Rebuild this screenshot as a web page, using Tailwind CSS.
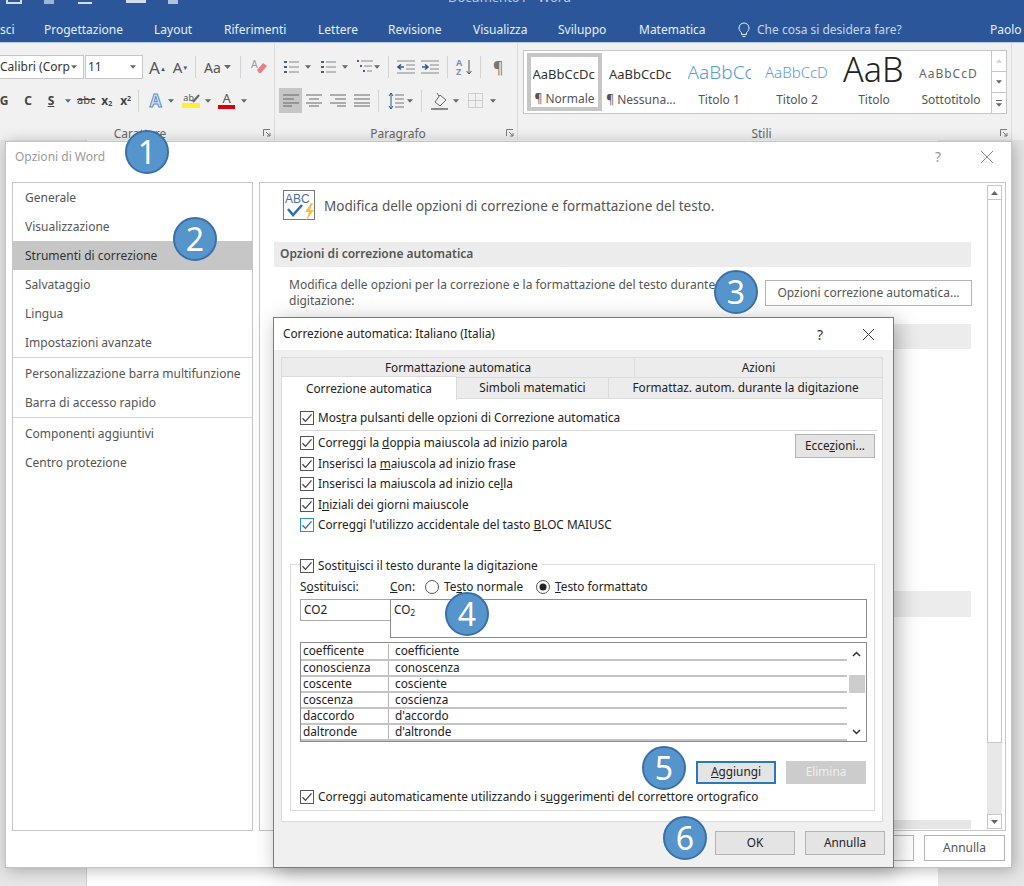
<!DOCTYPE html>
<html lang="it">
<head>
  <meta charset="UTF-8" />
  <title>Opzioni di Word</title>
  <script src="https://cdn.jsdelivr.net/npm/@tailwindcss/browser@4"></script>
</head>
<body class="m-0 bg-white">
<svg class="hidden">
  <symbol id="cb" viewBox="0 0 14 14"><rect x=".5" y=".5" width="13" height="13" fill="#fff" stroke="#555"/><path d="M2.5 7.2l3 3.2 6-7" fill="none" stroke="#444" stroke-width="1.3"/></symbol>
  <symbol id="cb-blue" viewBox="0 0 14 14"><rect x=".5" y=".5" width="13" height="13" fill="#fff" stroke="#2f8fd0"/><path d="M2.5 7.2l3 3.2 6-7" fill="none" stroke="#2a6f9e" stroke-width="1.3"/></symbol>
  <symbol id="caret" viewBox="0 0 7 4"><path d="M0 0h7L3.5 4z" fill="#666"/></symbol>
</svg>

<div class="relative w-[1024px] h-[886px] overflow-hidden font-['Noto_Sans',sans-serif] text-[12px] text-[#333]">

  <!-- title bar + tabs -->
  <div class="h-[43px] bg-[#2b579a] border-b border-[#b9cde6] text-white overflow-hidden">
    <div class="h-[18px] flex items-start">
      <div class="flex items-start gap-[22px] pl-[6px] w-[440px] opacity-80">
        <div class="w-[16px] h-[4px] border-b-2 border-x-2 border-white"></div>
        <div class="w-[10px] h-[4px] bg-white/70"></div>
        <div class="w-[14px] h-[4px] border-b-2 border-white ml-[2px]"></div>
        <div class="w-[20px] h-[3px] bg-white ml-[12px]"></div>
        <div class="w-[10px] h-[4px] bg-white/80"></div>
      </div>
      <div class="ml-[8px] -mt-[12px] text-[13px] text-white/70">Documento1 - Word</div>
    </div>
    <div class="h-[24px] flex items-center text-[12px] text-[#e6edf7]">
      <span class="w-[44px]">sci</span>
      <span class="w-[110px]">Progettazione</span>
      <span class="w-[70px]">Layout</span>
      <span class="w-[94px]">Riferimenti</span>
      <span class="w-[70px]">Lettere</span>
      <span class="w-[85px]">Revisione</span>
      <span class="w-[85px]">Visualizza</span>
      <span class="w-[81px]">Sviluppo</span>
      <span class="w-[99px]">Matematica</span>
      <svg class="w-[12px] h-[16px] mr-[7px]" viewBox="0 0 12 16" fill="none" stroke="#e6edf7"><path d="M3.5 10.5C2 9.2 1 8 1 6a5 5 0 0 1 10 0c0 2-1 3.2-2.500 4.500v2h-5zM4.500 14.500h3"/></svg>
      <span class="w-[233px] text-[#c6d5ea]">Che cosa si desidera fare?</span>
      <span>Paolo</span>
    </div>
  </div>

  <!-- ribbon -->
  <div class="h-[97px] bg-[#f1f1f1] flex">
    <!-- Carattere -->
    <div class="w-[275px] shrink-0 border-r border-[#dcdcdc] relative">
      <div class="flex items-center h-[24px] mt-[12px] -ml-[5px]">
        <div class="w-[89px] h-[24px] bg-white border border-[#c6c6c6] flex items-center justify-between pr-[6px]"><span class="pl-[4px] whitespace-nowrap">Calibri (Corp</span><svg class="w-[6px] h-[4px]"><use href="#caret"/></svg></div>
        <div class="w-[58px] h-[24px] ml-[1px] bg-white border border-[#c6c6c6] flex items-center justify-between pr-[6px]"><span class="pl-[2px]">11</span><svg class="w-[6px] h-[4px]"><use href="#caret"/></svg></div>
        <div class="w-[23px] ml-[3px] text-center text-[17px] leading-none text-[#555]">A<sup class="text-[6px] text-[#2b579a]">▲</sup></div>
        <div class="w-[23px] text-center text-[15px] leading-none text-[#555]">A<sup class="text-[6px] text-[#2b579a]">▼</sup></div>
        <div class="w-px h-[22px] bg-[#d4d4d4] ml-[3px]"></div>
        <div class="ml-[8px] text-[14px] text-[#555]">Aa</div>
        <svg class="w-[7px] h-[4px] ml-[3px]"><use href="#caret"/></svg>
        <div class="w-px h-[22px] bg-[#d4d4d4] ml-[9px]"></div>
        <svg class="w-[18px] h-[18px] ml-[9px]" viewBox="0 0 18 18"><text x="1" y="10" font-size="10" fill="#8a9ab0" font-family="Liberation Sans">A</text><path d="M7 12l6-7 4 3-6 7H9z" fill="#e8808a"/></svg>
      </div>
      <div class="flex items-center h-[25px] mt-[9px] text-[#444]">
        <b class="w-[12px] text-center text-[12px] -ml-[2px]">G</b>
        <b class="w-[14px] ml-[11px] text-center text-[12px]">C</b>
        <b class="w-[12px] ml-[10px] text-center text-[12px] underline">S</b>
        <svg class="w-[6px] h-[4px] ml-[8px]"><use href="#caret"/></svg>
        <span class="ml-[6px] text-[11px] line-through">abc</span>
        <b class="ml-[6px] text-[12px]">x<sub class="text-[7px]">2</sub></b>
        <b class="ml-[8px] text-[12px]">x<sup class="text-[7px]">2</sup></b>
        <div class="w-px h-[22px] bg-[#d4d4d4] ml-[7px]"></div>
        <span class="w-[17px] ml-[8px] text-center text-[17px] font-bold text-[#d9e6f5] [-webkit-text-stroke:1px_#5b8fc7]">A</span>
        <svg class="w-[6px] h-[4px] ml-[4px]"><use href="#caret"/></svg>
        <div class="relative w-[18px] ml-[8px] flex flex-col items-center leading-none"><span class="text-[9px] text-[#555] -ml-[5px]">ab</span><svg class="absolute right-0 top-[1px] w-[9px] h-[10px]" viewBox="0 0 9 10" fill="none" stroke="#666" stroke-width="2"><path d="M8 1L2 8"/></svg><span class="w-[18px] h-[5px] mt-[1px] bg-[#ffee33]"></span></div>
        <svg class="w-[6px] h-[4px] ml-[5px]"><use href="#caret"/></svg>
        <div class="w-[17px] ml-[7px] flex flex-col items-center leading-none"><span class="text-[13px] text-[#555]">A</span><span class="w-[17px] h-[4px] bg-[#d8000f]"></span></div>
        <svg class="w-[6px] h-[4px] ml-[6px]"><use href="#caret"/></svg>
      </div>
      <div class="absolute left-0 right-0 top-[82px] text-center text-[#666] pl-[6px]">Carattere</div>
      <svg class="absolute right-[3px] bottom-[3px] w-[8px] h-[8px]" viewBox="0 0 8 8" fill="none" stroke="#777"><path d="M.5 7V.5H7M3 3l4 4M7 4v3H4"/></svg>
    </div>
    <!-- Paragrafo -->
    <div class="w-[243px] shrink-0 border-r border-[#dcdcdc] relative">
      <div class="flex items-center h-[24px] mt-[12px] pl-[8px]">
        <svg class="w-[16px] h-[16px]" viewBox="0 0 16 16" stroke="#888"><path d="M6 3h10M6 8h10M6 13h10"/><path d="M1 3h3M1 8h3M1 13h3" stroke="#44617f" stroke-width="2"/></svg>
        <svg class="w-[6px] h-[4px] ml-[6px]"><use href="#caret"/></svg>
        <svg class="w-[16px] h-[16px] ml-[9px]" viewBox="0 0 16 16" stroke="#888"><path d="M6 3h10M6 8h10M6 13h10"/><path d="M1 3h3M1 8h3M1 13h3" stroke="#44617f" stroke-width="2"/></svg>
        <svg class="w-[6px] h-[4px] ml-[6px]"><use href="#caret"/></svg>
        <svg class="w-[17px] h-[16px] ml-[8px]" viewBox="0 0 17 16" stroke="#888"><path d="M5 2h12M8 7h8M11 12h5"/><path d="M1 2h2M4 7h2M7 12h2" stroke="#44617f" stroke-width="2"/></svg>
        <svg class="w-[6px] h-[4px] ml-[1px]"><use href="#caret"/></svg>
        <div class="w-px h-[22px] bg-[#d4d4d4] ml-[8px]"></div>
        <svg class="w-[18px] h-[14px] ml-[8px]" viewBox="0 0 18 14" stroke="#888"><path d="M0 1h18M9 5h9M9 9h9M0 13h18"/><path d="M7 7H1m3-2.500L1 7l3 2.500" fill="none" stroke="#2b579a" stroke-width="1.500"/></svg>
        <svg class="w-[18px] h-[14px] ml-[6px]" viewBox="0 0 18 14" stroke="#888"><path d="M0 1h18M9 5h9M9 9h9M0 13h18"/><path d="M1 7h6M4 4.500L7 7 4 9.500" fill="none" stroke="#2b579a" stroke-width="1.500"/></svg>
        <div class="w-px h-[22px] bg-[#d4d4d4] ml-[8px]"></div>
        <div class="ml-[8px] w-[10px] text-[9px] leading-[9px] font-bold text-[#7f8fc0]">A<br>Z</div>
        <svg class="w-[6px] h-[16px]" viewBox="0 0 6 16" fill="none" stroke="#555"><path d="M3 1v14M.5 12L3 15l2.500-3"/></svg>
        <div class="w-px h-[22px] bg-[#d4d4d4] ml-[8px]"></div>
        <span class="ml-[12px] text-[16px] text-[#777]">¶</span>
      </div>
      <div class="flex items-center h-[25px] mt-[9px] pl-[4px]">
        <div class="w-[23px] h-[25px] bg-[#c6c6c6] flex items-center justify-center"><svg class="w-[16px] h-[13px]" viewBox="0 0 16 13" stroke="#666"><path d="M0 1h16M0 5h11M0 9h16M0 12h9"/></svg></div>
        <svg class="w-[16px] h-[13px] ml-[4px]" viewBox="0 0 16 13" stroke="#666"><path d="M0 1h16M3 5h10M0 9h16M3 12h10"/></svg>
        <svg class="w-[16px] h-[13px] ml-[8px]" viewBox="0 0 16 13" stroke="#666"><path d="M0 1h16M5 5h11M0 9h16M7 12h9"/></svg>
        <svg class="w-[16px] h-[13px] ml-[8px]" viewBox="0 0 16 13" stroke="#666"><path d="M0 1h16M0 5h16M0 9h16M0 12h16"/></svg>
        <div class="w-px h-[22px] bg-[#d4d4d4] ml-[8px]"></div>
        <svg class="w-[16px] h-[18px] ml-[9px]" viewBox="0 0 16 18" stroke="#777"><path d="M7 3h9M7 7h9M7 11h9M7 15h9"/><path d="M3 1v16M1 4l2-3 2 3M1 14l2 3 2-3" fill="none" stroke="#2b579a"/></svg>
        <svg class="w-[6px] h-[4px] ml-[3px]"><use href="#caret"/></svg>
        <div class="w-px h-[22px] bg-[#d4d4d4] ml-[8px]"></div>
        <svg class="w-[19px] h-[18px] ml-[8px]" viewBox="0 0 19 18" fill="none" stroke="#666"><path d="M5 10l5-7 6 5-6 6zM9 4L7 1"/><path d="M1 17h17" stroke-width="1.500"/></svg>
        <svg class="w-[6px] h-[4px] ml-[4px]"><use href="#caret"/></svg>
        <svg class="w-[15px] h-[15px] ml-[9px]" viewBox="0 0 15 15" fill="none" stroke="#aaa" stroke-dasharray="1 1"><path d="M.5.5h14v14H.5zM7.500.5v14M.5 7.500h14"/></svg>
        <svg class="w-[6px] h-[4px] ml-[7px]"><use href="#caret"/></svg>
      </div>
      <div class="absolute left-0 right-0 top-[82px] text-center text-[#666] pl-[4px]">Paragrafo</div>
      <svg class="absolute right-[3px] bottom-[3px] w-[8px] h-[8px]" viewBox="0 0 8 8" fill="none" stroke="#777"><path d="M.5 7V.5H7M3 3l4 4M7 4v3H4"/></svg>
    </div>
    <!-- Stili -->
    <div class="w-[494px] shrink-0 border-r border-[#dcdcdc] relative pl-[5px] pt-[7px]">
      <div class="w-[484px] h-[64px] bg-white border border-[#c6c6c6] flex pl-[3px] pt-[2px]">
        <div class="w-[75px] h-[58px] border-[4px] border-[#c6c6c6] flex flex-col items-center overflow-hidden whitespace-nowrap text-[#333]"><span class="h-[34px] shrink-0 pt-[8px] text-[13px] w-[64px] overflow-hidden">AaBbCcDc</span><span class="leading-[16px] text-[#555]">¶ Normale</span></div>
        <div class="w-[78px] flex flex-col items-center whitespace-nowrap text-[#333]"><span class="h-[38px] pt-[12px] text-[13px] w-[64px] overflow-hidden">AaBbCcDc</span><span class="text-[#555]">¶ Nessuna...</span></div>
        <div class="w-[78px] flex flex-col items-center whitespace-nowrap"><span class="h-[38px] pt-[5px] text-[19px] font-light w-[63px] overflow-hidden text-[#5b9bd5]">AaBbCc</span><span class="text-[#555]">Titolo 1</span></div>
        <div class="w-[78px] flex flex-col items-center whitespace-nowrap"><span class="h-[38px] pt-[8px] text-[15px] font-light w-[64px] overflow-hidden text-[#5b9bd5]">AaBbCcD</span><span class="text-[#555]">Titolo 2</span></div>
        <div class="w-[76px] flex flex-col items-center whitespace-nowrap"><span class="h-[38px] text-[34px] leading-[32px] font-light w-[62px] overflow-hidden text-[#222]">AaB</span><span class="text-[#555]">Titolo</span></div>
        <div class="w-[78px] flex flex-col items-center whitespace-nowrap"><span class="h-[38px] pt-[12px] text-[12px] tracking-[1px] w-[64px] overflow-hidden text-[#666]">AaBbCcD</span><span class="text-[#555]">Sottotitolo</span></div>
        <div class="w-[15px] ml-auto border-l border-[#c6c6c6] flex flex-col -mt-[2px]">
          <div class="h-[21px] flex items-center justify-center border-b border-[#c6c6c6]"><svg class="w-[6px] h-[4px] rotate-180 opacity-30"><use href="#caret"/></svg></div>
          <div class="h-[21px] flex items-center justify-center border-b border-[#c6c6c6]"><svg class="w-[6px] h-[4px]"><use href="#caret"/></svg></div>
          <div class="h-[20px] flex flex-col gap-[2px] items-center justify-center"><div class="w-[6px] h-px bg-[#666]"></div><svg class="w-[6px] h-[4px]"><use href="#caret"/></svg></div>
        </div>
      </div>
      <div class="absolute left-0 right-0 top-[82px] text-center text-[#666] pr-[6px]">Stili</div>
      <svg class="absolute right-[3px] bottom-[3px] w-[8px] h-[8px]" viewBox="0 0 8 8" fill="none" stroke="#777"><path d="M.5 7V.5H7M3 3l4 4M7 4v3H4"/></svg>
    </div>
  </div>

  <!-- document area -->
  <div class="h-[746px] bg-[#e6e6e6] pl-[86px]">
    <div class="w-[852px] h-full bg-white border-l border-[#cfcfcf]"></div>
  </div>

  <!-- Opzioni di Word window -->
  <div class="absolute left-[5px] top-[141px] w-[1007px] h-[727px] bg-white border border-[#c4c4c4] shadow-[2px_2px_14px_rgba(0,0,0,0.28)]">
    <div class="h-[40px] flex items-start pl-[9px] pr-[18px] pt-[6px]">
      <span class="text-[#9a9a9a]">Opzioni di Word</span>
      <span class="ml-auto text-[14px] leading-[18px] text-[#999]">?</span>
      <svg class="w-[12px] h-[12px] ml-[40px] mt-[3px]" viewBox="0 0 12 12" stroke="#8a8a8a"><path d="M0 0l12 12M12 0L0 12"/></svg>
    </div>
    <div class="flex pl-[6px] gap-[6px]">
      <!-- left list -->
      <div class="w-[241px] h-[649px] border border-[#c6c6c6] text-[#555]">
        <div class="h-[29px] pl-[12px] flex items-center">Generale</div>
        <div class="h-[29px] pl-[12px] flex items-center">Visualizzazione</div>
        <div class="h-[29px] pl-[12px] flex items-center bg-[#c6c6c6] text-[#333]">Strumenti di correzione</div>
        <div class="h-[29px] pl-[12px] flex items-center">Salvataggio</div>
        <div class="h-[29px] pl-[12px] flex items-center">Lingua</div>
        <div class="h-[29px] pl-[12px] flex items-center">Impostazioni avanzate</div>
        <div class="h-px bg-[#d4d4d4]"></div>
        <div class="h-[29px] mt-[1px] pl-[12px] flex items-center">Personalizzazione barra multifunzione</div>
        <div class="h-[29px] pl-[12px] flex items-center">Barra di accesso rapido</div>
        <div class="h-px bg-[#d4d4d4]"></div>
        <div class="h-[29px] mt-[1px] pl-[12px] flex items-center">Componenti aggiuntivi</div>
        <div class="h-[29px] pl-[12px] flex items-center">Centro protezione</div>
      </div>
      <!-- right panel -->
      <div class="relative w-[747px] h-[649px] border border-[#c6c6c6] overflow-hidden">
        <div class="flex items-center pl-[23px] pt-[6px] h-[40px]">
          <svg class="w-[34px] h-[33px]" viewBox="0 0 34 33"><rect x=".5" y=".5" width="31" height="29" fill="#fff" stroke="#777"/><text x="2" y="13" font-size="12" fill="#4a6f95" font-family="Liberation Sans">ABC</text><path d="M5 19l5 6 9-10" fill="none" stroke="#2b6fb5" stroke-width="2.500"/><path d="M28 13l-6 9h4l-3 9 8-11h-4l3-7z" fill="#f2c14e"/></svg>
          <span class="ml-[7px] text-[13.500px] text-[#555]">Modifica delle opzioni di correzione e formattazione del testo.</span>
        </div>
        <div class="mt-[19px] ml-[14px] w-[697px] h-[25px] bg-[#ececec] pl-[6px] pb-[2px] flex items-center font-semibold text-[#555]">Opzioni di correzione automatica</div>
        <div class="flex ml-[29px] mt-[10px] w-[683px] justify-between text-[#555]">
          <p class="w-[440px] leading-[16px]">Modifica delle opzioni per la correzione e la formattazione del testo durante la digitazione:</p>
          <div class="w-[207px] h-[26px] mt-[3px] border border-[#b4b4b4] flex items-center justify-center">Opzioni correzione automatica...</div>
        </div>
        <div class="mt-[15px] ml-[14px] w-[697px] h-[25px] bg-[#ececec]"></div>
        <div class="mt-[242px] ml-[14px] w-[697px] h-[26px] bg-[#ececec]"></div>
        <div class="mt-[203px] ml-[14px] w-[697px] h-[9px] bg-[#e6e6e6]"></div>
        <!-- scrollbar -->
        <div class="absolute right-[3px] top-[2px] bottom-[1px] w-[15px] bg-[#e8e8e8] flex flex-col">
          <div class="h-[15px] bg-white border border-[#c6c6c6] flex items-center justify-center"><svg class="w-[7px] h-[4px] rotate-180"><use href="#caret"/></svg></div>
          <div class="h-[543px] bg-white border-x border-b border-[#c6c6c6]"></div>
          <div class="h-[15px] mt-auto bg-white border border-[#c6c6c6] flex items-center justify-center"><svg class="w-[7px] h-[4px]"><use href="#caret"/></svg></div>
        </div>
      </div>
    </div>
    <div class="flex justify-end gap-[10px] pr-[6px] mt-[4px]">
      <div class="w-[80px] h-[26px] border border-[#b4b4b4]"></div>
      <div class="w-[81px] h-[26px] border border-[#b4b4b4] flex items-center justify-center text-[#555]">Annulla</div>
    </div>
  </div>

  <!-- Correzione automatica dialog -->
  <div class="absolute left-[273px] top-[317px] w-[621px] h-[551px] bg-[#f0f0f0] border border-[#3f8bc4] shadow-[4px_4px_20px_rgba(0,0,0,0.3)] text-[11.800px] text-[#222]">
    <div class="h-[32px] bg-white flex items-center pl-[9px] pr-[19px]">
      <span>Correzione automatica: Italiano (Italia)</span>
      <span class="ml-auto text-[14px] text-[#333]">?</span>
      <svg class="w-[11px] h-[11px] ml-[40px]" viewBox="0 0 11 11" stroke="#333"><path d="M0 0l11 11M11 0L0 11"/></svg>
    </div>
    <div class="ml-[7px] mt-[7px] w-[603px]">
      <div class="flex h-[20px] w-[602px] pt-[1px] border border-b-0 border-[#dcdcdc] bg-[#ececec]">
        <div class="w-[353px] border-r border-[#dcdcdc] flex items-center justify-center">Formattazione automatica</div>
        <div class="flex-1 flex items-center justify-center">Azioni</div>
      </div>
      <div class="flex h-[21px] w-[602px] bg-[#ececec] border-r border-t border-[#dcdcdc]">
        <div class="relative z-10 w-[176px] h-[24px] -mt-[2px] bg-white border border-b-0 border-[#dcdcdc] flex items-center justify-center">Correzione automatica</div>
        <div class="w-[152px] border-r border-[#dcdcdc] flex items-center justify-center">Simboli matematici</div>
        <div class="flex-1 flex items-center justify-center">Formattaz. autom. durante la digitazione</div>
      </div>
      <!-- tab panel -->
      <div class="relative w-[602px] h-[424px] bg-white border border-[#dcdcdc] pl-[18px]">
        <div class="h-[31px] pt-[6px] flex items-center gap-[4px]"><svg class="w-[14px] h-[14px] shrink-0"><use href="#cb"/></svg><span>Mos<u>t</u>ra pulsanti delle opzioni di Correzione automatica</span></div>
        <div class="w-[577px] h-[1px] bg-[#d8d8d8]"></div>
        <div class="flex w-[575px] justify-between">
          <div class="pt-[2px]">
            <div class="h-[20.500px] flex items-center gap-[4px]"><svg class="w-[14px] h-[14px] shrink-0"><use href="#cb"/></svg><span>Correggi la <u>d</u>oppia maiuscola ad inizio parola</span></div>
            <div class="h-[20.500px] flex items-center gap-[4px]"><svg class="w-[14px] h-[14px] shrink-0"><use href="#cb"/></svg><span>Inserisci la <u>m</u>aiuscola ad inizio frase</span></div>
            <div class="h-[20.500px] flex items-center gap-[4px]"><svg class="w-[14px] h-[14px] shrink-0"><use href="#cb"/></svg><span>Inserisci la maiuscola ad inizio ce<u>l</u>la</span></div>
            <div class="h-[20.500px] flex items-center gap-[4px]"><svg class="w-[14px] h-[14px] shrink-0"><use href="#cb"/></svg><span>I<u>n</u>iziali dei giorni maiuscole</span></div>
            <div class="h-[20.500px] flex items-center gap-[4px]"><svg class="w-[14px] h-[14px] shrink-0"><use href="#cb-blue"/></svg><span>Correggi l'utilizzo accidentale del tasto <u>B</u>LOC MAIUSC</span></div>
          </div>
          <div class="w-[80px] h-[24px] mt-[3px] bg-[#e4e4e4] border border-[#b4b4b4] flex items-center justify-center"><span>Ecce<u>z</u>ioni...</span></div>
        </div>
        <!-- replace group -->
        <div class="relative -ml-[10px] mt-[28px] w-[585px] h-[247px] border border-[#dcdcdc] pl-[9px]">
          <div class="absolute left-[9px] -top-[7px] pr-[4px] h-[16px] bg-white flex items-center gap-[4px]"><svg class="w-[14px] h-[14px]"><use href="#cb"/></svg><span>Sostit<u>u</u>isci il testo durante la digitazione</span></div>
          <div class="flex items-center h-[16px] mt-[14px]">
            <span class="w-[90px]">S<u>o</u>stituisci:</span>
            <span class="w-[35px]"><u>C</u>on:</span>
            <svg class="w-[14px] h-[14px]" viewBox="0 0 14 14"><circle cx="7" cy="7" r="6.500" fill="#fff" stroke="#555"/></svg>
            <span class="ml-[5px] w-[92px]">Te<u>s</u>to normale</span>
            <svg class="w-[14px] h-[14px]" viewBox="0 0 14 14"><circle cx="7" cy="7" r="6.500" fill="#fff" stroke="#555"/><circle cx="7" cy="7" r="3.500" fill="#222"/></svg>
            <span class="ml-[5px]"><u>T</u>esto formattato</span>
          </div>
          <div class="flex mt-[4px] items-start">
            <div class="w-[90px] h-[22px] border border-[#a8a8a8] border-r-0 pl-[3px] flex items-center">CO2</div>
            <div class="w-[477px] h-[39px] border border-[#8c8c8c] pl-[3px] pt-[1px]">CO<sub class="text-[8px]">2</sub></div>
          </div>
          <div class="relative w-[567px] h-[100px] mt-[4px] border border-[#8c8c8c] flex">
            <div class="w-[546px] pt-[1px]">
              <div class="flex h-[17px] border-b-2 border-[#c4c4c4] items-center"><span class="w-[88px] pl-[2px] h-full border-r border-[#b4b4b4] flex items-center">coefficente</span><span class="pl-[6px]">coefficiente</span></div>
              <div class="flex h-[16px] border-b-2 border-[#c4c4c4] items-center"><span class="w-[88px] pl-[2px] h-full border-r border-[#b4b4b4] flex items-center">conoscienza</span><span class="pl-[6px]">conoscenza</span></div>
              <div class="flex h-[16px] border-b-2 border-[#c4c4c4] items-center"><span class="w-[88px] pl-[2px] h-full border-r border-[#b4b4b4] flex items-center">coscente</span><span class="pl-[6px]">cosciente</span></div>
              <div class="flex h-[16px] border-b-2 border-[#c4c4c4] items-center"><span class="w-[88px] pl-[2px] h-full border-r border-[#b4b4b4] flex items-center">coscenza</span><span class="pl-[6px]">coscienza</span></div>
              <div class="flex h-[16px] border-b-2 border-[#c4c4c4] items-center"><span class="w-[88px] pl-[2px] h-full border-r border-[#b4b4b4] flex items-center">daccordo</span><span class="pl-[6px]">d'accordo</span></div>
              <div class="flex h-[16px] border-b-2 border-[#c4c4c4] items-center"><span class="w-[88px] pl-[2px] h-full border-r border-[#b4b4b4] flex items-center">daltronde</span><span class="pl-[6px]">d'altronde</span></div>
            </div>
            <div class="w-[19px] flex flex-col items-center">
              <svg class="w-[9px] h-[6px] mt-[8px]" viewBox="0 0 9 6" fill="none" stroke="#333" stroke-width="1.500"><path d="M1 5l3.500-3.500L8 5"/></svg>
              <div class="w-[16px] h-[18px] mt-[18px] bg-[#cdcdcd]"></div>
              <svg class="w-[9px] h-[6px] mt-[36px]" viewBox="0 0 9 6" fill="none" stroke="#333" stroke-width="1.500"><path d="M1 1l3.500 3.500L8 1"/></svg>
            </div>
          </div>
          <div class="flex justify-end gap-[10px] pr-[8px] mt-[19px]">
            <div class="w-[80px] h-[23px] bg-[#e4e4e4] border-2 border-[#2b7ab8] flex items-center justify-center"><span><u>A</u>ggiungi</span></div>
            <div class="w-[80px] h-[23px] bg-[#cccccc] text-[#eeeeee] flex items-center justify-center">Elimina</div>
          </div>
          <div class="flex items-center gap-[4px] h-[16px] mt-[5px]"><svg class="w-[14px] h-[14px]"><use href="#cb"/></svg><span>Correggi automaticamente utilizzando i s<u>u</u>ggerimenti del correttore ortografico</span></div>
        </div>
      </div>
      <div class="flex justify-end gap-[10px] w-[604px] mt-[9px]">
        <div class="w-[80px] h-[24px] bg-[#e4e4e4] border border-[#b4b4b4] flex items-center justify-center">OK</div>
        <div class="w-[80px] h-[24px] bg-[#e4e4e4] border border-[#b4b4b4] flex items-center justify-center">Annulla</div>
      </div>
    </div>
  </div>

  <!-- numbered callouts -->
  <div class="absolute left-[125px] top-[130px] w-[44px] h-[44px] rounded-full bg-[#5694cc] border-2 border-[#3a70a8] text-white text-[32px] flex items-center justify-center">1</div>
  <div class="absolute left-[173px] top-[217px] w-[44px] h-[44px] rounded-full bg-[#5694cc] border-2 border-[#3a70a8] text-white text-[32px] flex items-center justify-center">2</div>
  <div class="absolute left-[714px] top-[270px] w-[44px] h-[44px] rounded-full bg-[#5694cc] border-2 border-[#3a70a8] text-white text-[32px] flex items-center justify-center">3</div>
  <div class="absolute left-[445px] top-[592px] w-[44px] h-[44px] rounded-full bg-[#5694cc] border-2 border-[#3a70a8] text-white text-[32px] flex items-center justify-center">4</div>
  <div class="absolute left-[642px] top-[746px] w-[44px] h-[44px] rounded-full bg-[#5694cc] border-2 border-[#3a70a8] text-white text-[32px] flex items-center justify-center">5</div>
  <div class="absolute left-[663px] top-[816px] w-[44px] h-[44px] rounded-full bg-[#5694cc] border-2 border-[#3a70a8] text-white text-[32px] flex items-center justify-center">6</div>
</div>
</body>
</html>
